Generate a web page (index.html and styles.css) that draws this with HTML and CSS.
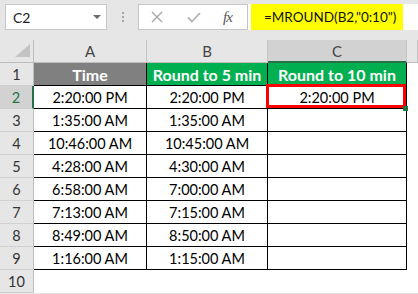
FILE: index.html
```html
<!DOCTYPE html>
<html>
<head>
<meta charset="utf-8">
<link rel="stylesheet" href="styles.css">
</head>
<body>
<div class="bar">
  <div class="namebox"><span>C2</span><svg class="dd" width="8" height="4" viewBox="0 0 8 4"><path d="M0 0H8L4 4Z" fill="#6a6a6a"/></svg></div>
  <div class="grip"><i></i><i></i><i></i></div>
  <div class="fxbox">
    <svg class="ico-x" width="12" height="12" viewBox="0 0 12 12"><path d="M1 1L11 11M11 1L1 11" stroke="#a8a8a8" stroke-width="1.4" fill="none"/></svg>
    <svg class="ico-ok" width="14" height="11" viewBox="0 0 14 11"><path d="M1 5.5L5 9.5L13 1" stroke="#b4b4b4" stroke-width="1.8" fill="none"/></svg>
    <span class="fx">fx</span>
  </div>
  <div class="formula"><span class="hl">=MROUND(B2,"0:10")</span></div>
</div>
<div class="sheet">
  <div class="corner"><svg width="15" height="13" viewBox="0 0 15 13"><path d="M0 13H15V0Z" fill="#c3c3c3"/></svg></div>
  <div class="col">A</div><div class="col">B</div><div class="col sel">C</div><div class="col"></div>

  <div class="rh">1</div><div class="cell h">Time</div><div class="cell h g">Round to 5 min</div><div class="cell h g">Round to 10 min</div><div class="blank"></div>

  <div class="rh sel">2</div><div class="cell">2:20:00 PM</div><div class="cell">2:20:00 PM</div><div class="cell active">2:20:00 PM<span class="selbox"></span><span class="handle"></span></div><div class="blank"></div>

  <div class="rh">3</div><div class="cell">1:35:00 AM</div><div class="cell">1:35:00 AM</div><div class="cell"></div><div class="blank"></div>
  <div class="rh">4</div><div class="cell">10:46:00 AM</div><div class="cell">10:45:00 AM</div><div class="cell"></div><div class="blank"></div>
  <div class="rh">5</div><div class="cell">4:28:00 AM</div><div class="cell">4:30:00 AM</div><div class="cell"></div><div class="blank"></div>
  <div class="rh">6</div><div class="cell">6:58:00 AM</div><div class="cell">7:00:00 AM</div><div class="cell"></div><div class="blank"></div>
  <div class="rh">7</div><div class="cell">7:13:00 AM</div><div class="cell">7:15:00 AM</div><div class="cell"></div><div class="blank"></div>
  <div class="rh">8</div><div class="cell">8:49:00 AM</div><div class="cell">8:50:00 AM</div><div class="cell"></div><div class="blank"></div>
  <div class="rh">9</div><div class="cell">1:16:00 AM</div><div class="cell">1:15:00 AM</div><div class="cell"></div><div class="blank"></div>
  <div class="rh">10</div><div class="blank"></div><div class="blank"></div><div class="blank"></div><div class="blank"></div>
</div>
</body>
</html>
```
FILE: styles.css
```css
html, body {
  margin: 0;
  padding: 0;
}
body {
  width: 418px;
  height: 294px;
  overflow: hidden;
  background: #e6e6e6;
  font-family: Lato, "Liberation Sans", sans-serif;
}
.bar {
  display: flex;
  align-items: flex-start;
  height: 40px;
  padding: 4px 0 0 5px;
  box-sizing: border-box;
}
.namebox {
  width: 102px;
  height: 26px;
  box-sizing: border-box;
  background: #fff;
  border: 1px solid #c6c6c6;
  display: flex;
  align-items: center;
  justify-content: space-between;
  padding: 0 5px 0 7px;
  font-size: 14px;
  color: #222;
}
.grip {
  width: 31px;
  display: flex;
  flex-direction: column;
  align-items: center;
  gap: 2px;
  padding-top: 8px;
}
.grip i {
  display: block;
  width: 2px;
  height: 2px;
  background: #a6a6a6;
}
.fxbox {
  width: 110px;
  height: 26px;
  box-sizing: border-box;
  background: #fff;
  border: 1px solid #c6c6c6;
  display: flex;
  align-items: center;
  padding-left: 12px;
}
.ico-ok {
  margin-left: 24px;
}
.fx {
  margin-left: 22px;
  font-family: "Liberation Serif", serif;
  font-style: italic;
  font-size: 15px;
  color: #555;
  letter-spacing: -1px;
}
.formula {
  flex: 1;
  height: 26px;
  background: #fff;
  padding-left: 3px;
}
.hl {
  display: block;
  width: 152px;
  height: 26px;
  box-sizing: border-box;
  padding-left: 13px;
  background: #ffff00;
  font-size: 13.5px;
  line-height: 26px;
  color: #111;
}
.sheet {
  display: grid;
  grid-template-columns: 34px 113px 121px 139px 1fr;
  grid-auto-rows: 23px;
}
.sheet > div {
  box-sizing: border-box;
  display: flex;
  align-items: center;
  justify-content: center;
  white-space: nowrap;
}
.corner {
  background: #e6e6e6;
  border-right: 1px solid #bdbdbd;
  border-bottom: 1px solid #bdbdbd;
  justify-content: flex-end !important;
  align-items: flex-end !important;
  padding: 0 3px 5px 0;
}
.col {
  background: #e6e6e6;
  border-right: 1px solid #c4c4c4;
  border-bottom: 1px solid #bdbdbd;
  color: #444;
  font-size: 15px;
}
.col.sel {
  background: #d2d2d2;
  border-bottom: 2px solid #217346;
}
.rh {
  background: #e6e6e6;
  border-right: 1px solid #bdbdbd;
  border-bottom: 1px solid #d0d0d0;
  color: #333;
  font-size: 14.5px;
}
.rh.sel {
  background: #d2d2d2;
  color: #217346;
  border-right: 2px solid #217346;
}
.cell {
  background: #fff;
  border-right: 1px solid #000;
  border-bottom: 1px solid #000;
  color: #000;
  font-size: 14.5px;
}
.cell.h {
  background: #808080;
  color: #fff;
  font-weight: bold;
  font-size: 16px;
}
.cell.h.g {
  background: #00b050;
}
.blank {
  background: #fff;
}
.active {
  position: relative;
}
.selbox {
  position: absolute;
  left: -2px;
  top: -2px;
  right: 0;
  bottom: 0;
  border: 3px solid #ff0000;
}
.handle {
  position: absolute;
  right: -2px;
  bottom: -3px;
  width: 5px;
  height: 5px;
  background: #217346;
}
```
